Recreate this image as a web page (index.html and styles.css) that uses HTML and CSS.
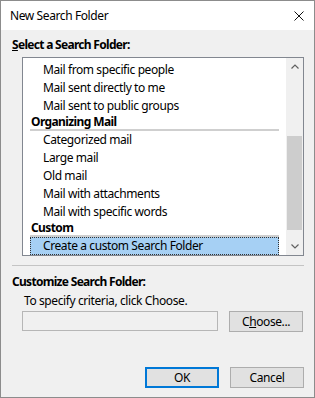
FILE: index.html
```html
<!DOCTYPE html>
<html lang="en">
<head>
<meta charset="UTF-8" />
<title>New Search Folder</title>
<link rel="stylesheet" href="styles.css">
</head>
<body>

<div class="dialog">
  <div class="titlebar">
    <span class="title">New Search Folder</span>
    <span class="close">
      <svg width="10" height="10" viewBox="0 0 10 10"><path d="M0.5 0.5 L9.5 9.5 M9.5 0.5 L0.5 9.5" stroke="#111" stroke-width="1" fill="none"/></svg>
    </span>
  </div>

  <div class="content">
    <div class="label"><u>S</u>elect a Search Folder:</div>

    <div class="listbox">
      <div class="list-items">
        <div class="item">Mail from specific people</div>
        <div class="item">Mail sent directly to me</div>
        <div class="item">Mail sent to public groups</div>
        <div class="group">Organizing Mail</div>
        <div class="item">Categorized mail</div>
        <div class="item">Large mail</div>
        <div class="item">Old mail</div>
        <div class="item">Mail with attachments</div>
        <div class="item">Mail with specific words</div>
        <div class="group">Custom</div>
        <div class="item selected">Create a custom Search Folder</div>
      </div>
      <div class="scrollbar">
        <div class="arrow">
          <svg width="8" height="5" viewBox="0 0 8 5"><path d="M0.5 4.5 L4 1 L7.5 4.5" stroke="#606060" stroke-width="1.2" fill="none"/></svg>
        </div>
        <div class="track">
          <div class="thumb"></div>
        </div>
        <div class="arrow">
          <svg width="8" height="5" viewBox="0 0 8 5"><path d="M0.5 0.5 L4 4 L7.5 0.5" stroke="#606060" stroke-width="1.2" fill="none"/></svg>
        </div>
      </div>
    </div>

    <div class="separator"></div>

    <div class="label section">Customize Search Folder:</div>
    <div class="hint">To specify criteria, click Choose.</div>
    <div class="choose-row">
      <div class="field"></div>
      <button class="btn">C<u>h</u>oose...</button>
    </div>

    <div class="footer">
      <button class="btn default">OK</button>
      <button class="btn">Cancel</button>
    </div>
  </div>
</div>

</body>
</html>
```

FILE: styles.css
```css
body {
  margin: 0;
  font-family: 'Segoe UI', 'Noto Sans', sans-serif;
  font-size: 12px;
  letter-spacing: -0.4px;
  color: #000;
}
.dialog {
  width: 315px;
  height: 398px;
  box-sizing: border-box;
  border: 1px solid #8c8c8c;
  background-color: #f0f0f0;
}
.titlebar {
  height: 29px;
  background-color: #fff;
  display: flex;
  align-items: center;
  justify-content: space-between;
  padding-left: 9px;
}
.close {
  width: 30px;
  display: flex;
  justify-content: center;
  align-items: center;
}
.content {
  padding: 7px 10px 0 11px;
}
.label {
  font-weight: 700;
  line-height: 16px;
  letter-spacing: -0.7px;
}
.label.section {
  margin-top: 8px;
}
.listbox {
  margin: 4px 0 0 10px;
  height: 199px;
  border: 1px solid #828790;
  background-color: #fff;
  box-sizing: border-box;
  display: flex;
  overflow: hidden;
}
.list-items {
  flex: 1;
  padding: 3px 7px 0 7px;
  overflow: hidden;
}
.item {
  height: 18px;
  line-height: 17px;
  padding-left: 13px;
  white-space: nowrap;
  box-sizing: border-box;
}
.item.selected {
  background-color: #a6d0f4;
  outline: 1px dotted #333;
  outline-offset: -1px;
}
.group {
  height: 16px;
  line-height: 14px;
  font-weight: 700;
  letter-spacing: -0.6px;
  padding-left: 1px;
  border-bottom: 2px solid #cfcfcf;
  box-sizing: border-box;
}
.scrollbar {
  width: 17px;
  background-color: #f0f0f0;
  display: flex;
  flex-direction: column;
}
.arrow {
  height: 17px;
  display: flex;
  align-items: center;
  justify-content: center;
}
.track {
  flex: 1;
  padding: 0 1px;
}
.thumb {
  margin-top: 61px;
  height: 94px;
  background-color: #cdcdcd;
}
.separator {
  margin-top: 9px;
  height: 1px;
  background-color: #c4c4c4;
}
.hint {
  margin: 3px 0 0 12px;
  line-height: 16px;
}
.choose-row {
  display: flex;
  gap: 11px;
  margin: 2px 0 0 10px;
}
.field {
  width: 196px;
  height: 20px;
  border: 1px solid #b6b6b6;
  box-sizing: border-box;
}
.btn {
  width: 74px;
  height: 21px;
  font-family: 'Segoe UI', 'Noto Sans', sans-serif;
  font-size: 12px;
  letter-spacing: -0.4px;
  background-color: #e1e1e1;
  border: 1px solid #adadad;
  padding: 0;
  color: #000;
}
.btn.default {
  border: 2px solid #0078d7;
}
.footer {
  display: flex;
  justify-content: flex-end;
  gap: 11px;
  margin-top: 35px;
}
```
